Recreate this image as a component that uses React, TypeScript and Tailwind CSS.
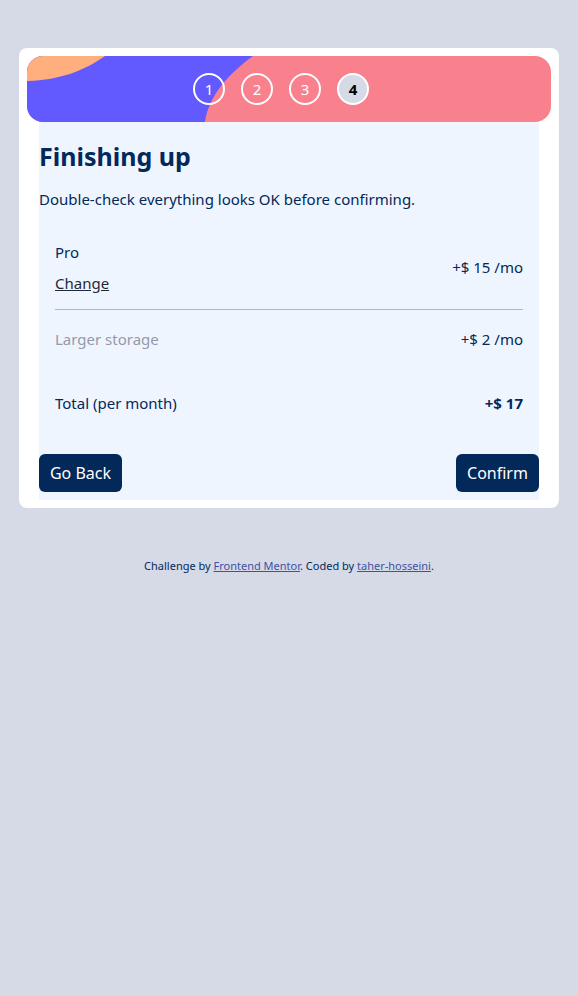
const steps = [1, 2, 3, 4];

function Banner() {
    return (
        <div className="relative h-[66px] rounded-2xl overflow-hidden bg-[#f9818e] flex items-center justify-center gap-4 pr-4">
            <svg className="absolute inset-0" width="524" height="66" viewBox="0 0 524 66">
                <path d="M0 0 H226 C204 16 182 38 178 66 H0 Z" fill="#6259ff" />
                <path d="M0 0 H78 C58 14 34 24 0 25 Z" fill="#ffaf7e" />
            </svg>
            {steps.map((s) => (
                <div
                    key={s}
                    className={
                        s === 4
                            ? "relative w-8 h-8 rounded-full border-2 border-white bg-[#d6d9e6] text-black font-bold flex items-center justify-center"
                            : "relative w-8 h-8 rounded-full border-2 border-white text-white flex items-center justify-center"
                    }
                >
                    {s}
                </div>
            ))}
        </div>
    );
}

const App = () => {
    return (
        <div className="min-h-[996px] bg-[#d6d9e6] pt-12 px-[19px] font-['Noto_Sans',sans-serif] text-[#022959] text-[15px]">
            <div className="bg-white rounded-lg p-2">
                <Banner />
                <div className="mx-3 bg-[#eff5ff]">
                    <h1 className="text-[25px] font-bold pt-[17px] leading-[34px]">Finishing up</h1>
                    <p className="mt-[14px] leading-6">Double-check everything looks OK before confirming.</p>
                    <div className="px-4 mt-[29px]">
                        <div className="flex items-center justify-between pb-[14px] border-b border-[#9699aa]/70">
                            <div className="flex flex-col">
                                <span className="leading-6">Pro</span>
                                <button className="text-left underline leading-6 mt-[7px] text-[#1f2937]">Change</button>
                            </div>
                            <span>+$ 15 /mo</span>
                        </div>
                        <div className="flex items-center justify-between pt-[17px] leading-6">
                            <span className="text-[#9699aa]">Larger storage</span>
                            <span>+$ 2 /mo</span>
                        </div>
                        <div className="flex items-center justify-between mt-[40px] leading-6">
                            <span>Total (per month)</span>
                            <span className="font-bold">+$ 17</span>
                        </div>
                    </div>
                    <div className="flex justify-between mt-[39px]">
                        <button className="bg-[#022959] text-white text-base rounded-md h-[38px] w-[83px] whitespace-nowrap">Go Back</button>
                        <button className="bg-[#022959] text-white text-base rounded-md h-[38px] w-[83px] whitespace-nowrap">Confirm</button>
                    </div>
                    <div className="h-2" />
                </div>
            </div>
            <p className="text-[11px] text-center mt-[50px] text-[#022959]">
                Challenge by <a href="#" className="underline text-[#3e52a3]">Frontend Mentor</a>. Coded by{" "}
                <a href="#" className="underline text-[#3e52a3]">taher-hosseini</a>.
            </p>
        </div>
    );
};

export default App;
